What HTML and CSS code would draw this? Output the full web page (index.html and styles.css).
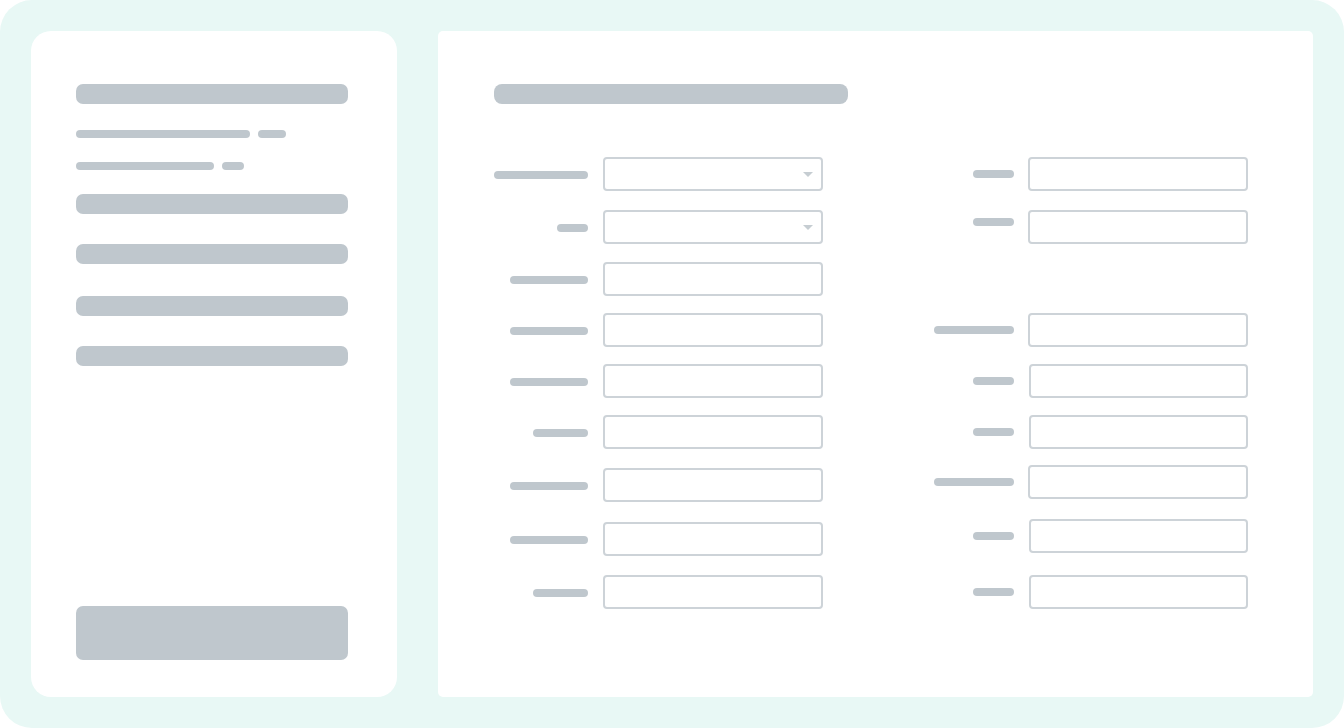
FILE: index.html
```html
<!DOCTYPE html>
<html lang="en">
<head>
<meta charset="utf-8">
<title>Form skeleton</title>
<link rel="stylesheet" href="styles.css">
</head>
<body>
<div class="frame">
  <aside class="sidebar">
    <div class="bar bar-head"></div>
    <div class="line-row first">
      <span class="line w174"></span><span class="line w28"></span>
    </div>
    <div class="line-row">
      <span class="line w138"></span><span class="line w22"></span>
    </div>
    <div class="bar bar-item b1"></div>
    <div class="bar bar-item b2"></div>
    <div class="bar bar-item b3"></div>
    <div class="bar bar-item b4"></div>
    <div class="spacer"></div>
    <div class="button"></div>
  </aside>
  <main class="content">
    <div class="title"></div>
    <div class="form">
      <div class="col col-left">
        <div class="row"><div class="label-cell"><span class="label w94"></span></div><div class="field select"></div></div>
        <div class="row mt2"><div class="label-cell"><span class="label w31"></span></div><div class="field select"></div></div>
        <div class="row mt1"><div class="label-cell"><span class="label w78"></span></div><div class="field"></div></div>
        <div class="row"><div class="label-cell"><span class="label w78"></span></div><div class="field"></div></div>
        <div class="row"><div class="label-cell"><span class="label w78"></span></div><div class="field"></div></div>
        <div class="row"><div class="label-cell"><span class="label w55"></span></div><div class="field"></div></div>
        <div class="row mt2"><div class="label-cell"><span class="label w78"></span></div><div class="field"></div></div>
        <div class="row mt3"><div class="label-cell"><span class="label w78"></span></div><div class="field"></div></div>
        <div class="row mt2"><div class="label-cell"><span class="label w55"></span></div><div class="field"></div></div>
      </div>
      <div class="col col-right">
        <div class="row"><div class="label-cell"><span class="label w41"></span></div><div class="field"></div></div>
        <div class="row mt2"><div class="label-cell high"><span class="label w41"></span></div><div class="field"></div></div>
        <div class="row empty mt1"></div>
        <div class="row"><div class="label-cell"><span class="label w80"></span></div><div class="field"></div></div>
        <div class="row"><div class="label-cell"><span class="label w41"></span></div><div class="field shift"></div></div>
        <div class="row"><div class="label-cell"><span class="label w41"></span></div><div class="field shift"></div></div>
        <div class="row mtn1"><div class="label-cell"><span class="label w80"></span></div><div class="field"></div></div>
        <div class="row mt3"><div class="label-cell"><span class="label w41"></span></div><div class="field shift"></div></div>
        <div class="row mt5"><div class="label-cell"><span class="label w41"></span></div><div class="field shift"></div></div>
      </div>
    </div>
  </main>
</div>
</body>
</html>
```

FILE: styles.css
```css
* { box-sizing: border-box; }

html, body {
  margin: 0;
  padding: 0;
  background: #ffffff;
  font-family: "Liberation Sans", Arial, sans-serif;
}

.frame {
  width: 1344px;
  height: 728px;
  background: #e8f8f5;
  border-radius: 32px;
  padding: 31px;
  display: flex;
  gap: 41px;
}

/* ---------- sidebar ---------- */
.sidebar {
  width: 366px;
  flex: none;
  background: #ffffff;
  border-radius: 20px;
  padding: 53px 49px 37px 45px;
  display: flex;
  flex-direction: column;
}

.bar {
  height: 20px;
  background: #bfc7cd;
  border-radius: 7px;
}

.line-row {
  display: flex;
  gap: 8px;
  margin-top: 24px;
}
.line-row.first { margin-top: 26px; }

.line {
  display: block;
  height: 8px;
  background: #bfc7cd;
  border-radius: 4px;
}
.w174 { width: 174px; }
.w28 { width: 28px; }
.w138 { width: 138px; }
.w22 { width: 22px; }

.bar-item.b1 { margin-top: 24px; }
.bar-item.b2 { margin-top: 30px; }
.bar-item.b3 { margin-top: 32px; }
.bar-item.b4 { margin-top: 30px; }

.spacer { flex: 1; }

.button {
  height: 54px;
  background: #bfc7cd;
  border-radius: 7px;
}

/* ---------- main ---------- */
.content {
  flex: 1;
  background: #ffffff;
  border-radius: 5px;
  padding: 53px 0 0 56px;
}

.title {
  width: 354px;
  height: 20px;
  background: #bfc7cd;
  border-radius: 8px;
  margin-bottom: 53px;
}

.form {
  display: grid;
  grid-template-columns: 329px 328px;
  column-gap: 97px;
}

.col {
  display: flex;
  flex-direction: column;
  gap: 17px;
}

.row {
  display: flex;
  align-items: center;
  height: 34px;
}
.mt1 { margin-top: 1px; }
.mt2 { margin-top: 2px; }
.mt3 { margin-top: 3px; }
.mt5 { margin-top: 5px; }
.mtn1 { margin-top: -1px; }

.label-cell {
  width: 94px;
  display: flex;
  justify-content: flex-end;
}
.col-left .label-cell { margin-right: 15px; padding-top: 2px; }
.col-right .label-cell { margin-right: 14px; }
.label-cell.high { align-self: flex-start; padding-top: 8px; }

.label {
  display: block;
  height: 8px;
  background: #bfc7cd;
  border-radius: 4px;
}
.w94 { width: 94px; }
.w31 { width: 31px; }
.w78 { width: 78px; }
.w55 { width: 55px; }
.w41 { width: 41px; }
.w80 { width: 80px; }

.field {
  width: 220px;
  height: 34px;
  border: 2px solid #cdd3d8;
  border-radius: 4px;
  background: #ffffff;
}
.field.shift { margin-left: 1px; }

.field.select { position: relative; }
.field.select::after {
  content: "";
  position: absolute;
  right: 8px;
  top: 13px;
  width: 0;
  height: 0;
  border-left: 5px solid transparent;
  border-right: 5px solid transparent;
  border-top: 5px solid #c6cdd2;
}
```
